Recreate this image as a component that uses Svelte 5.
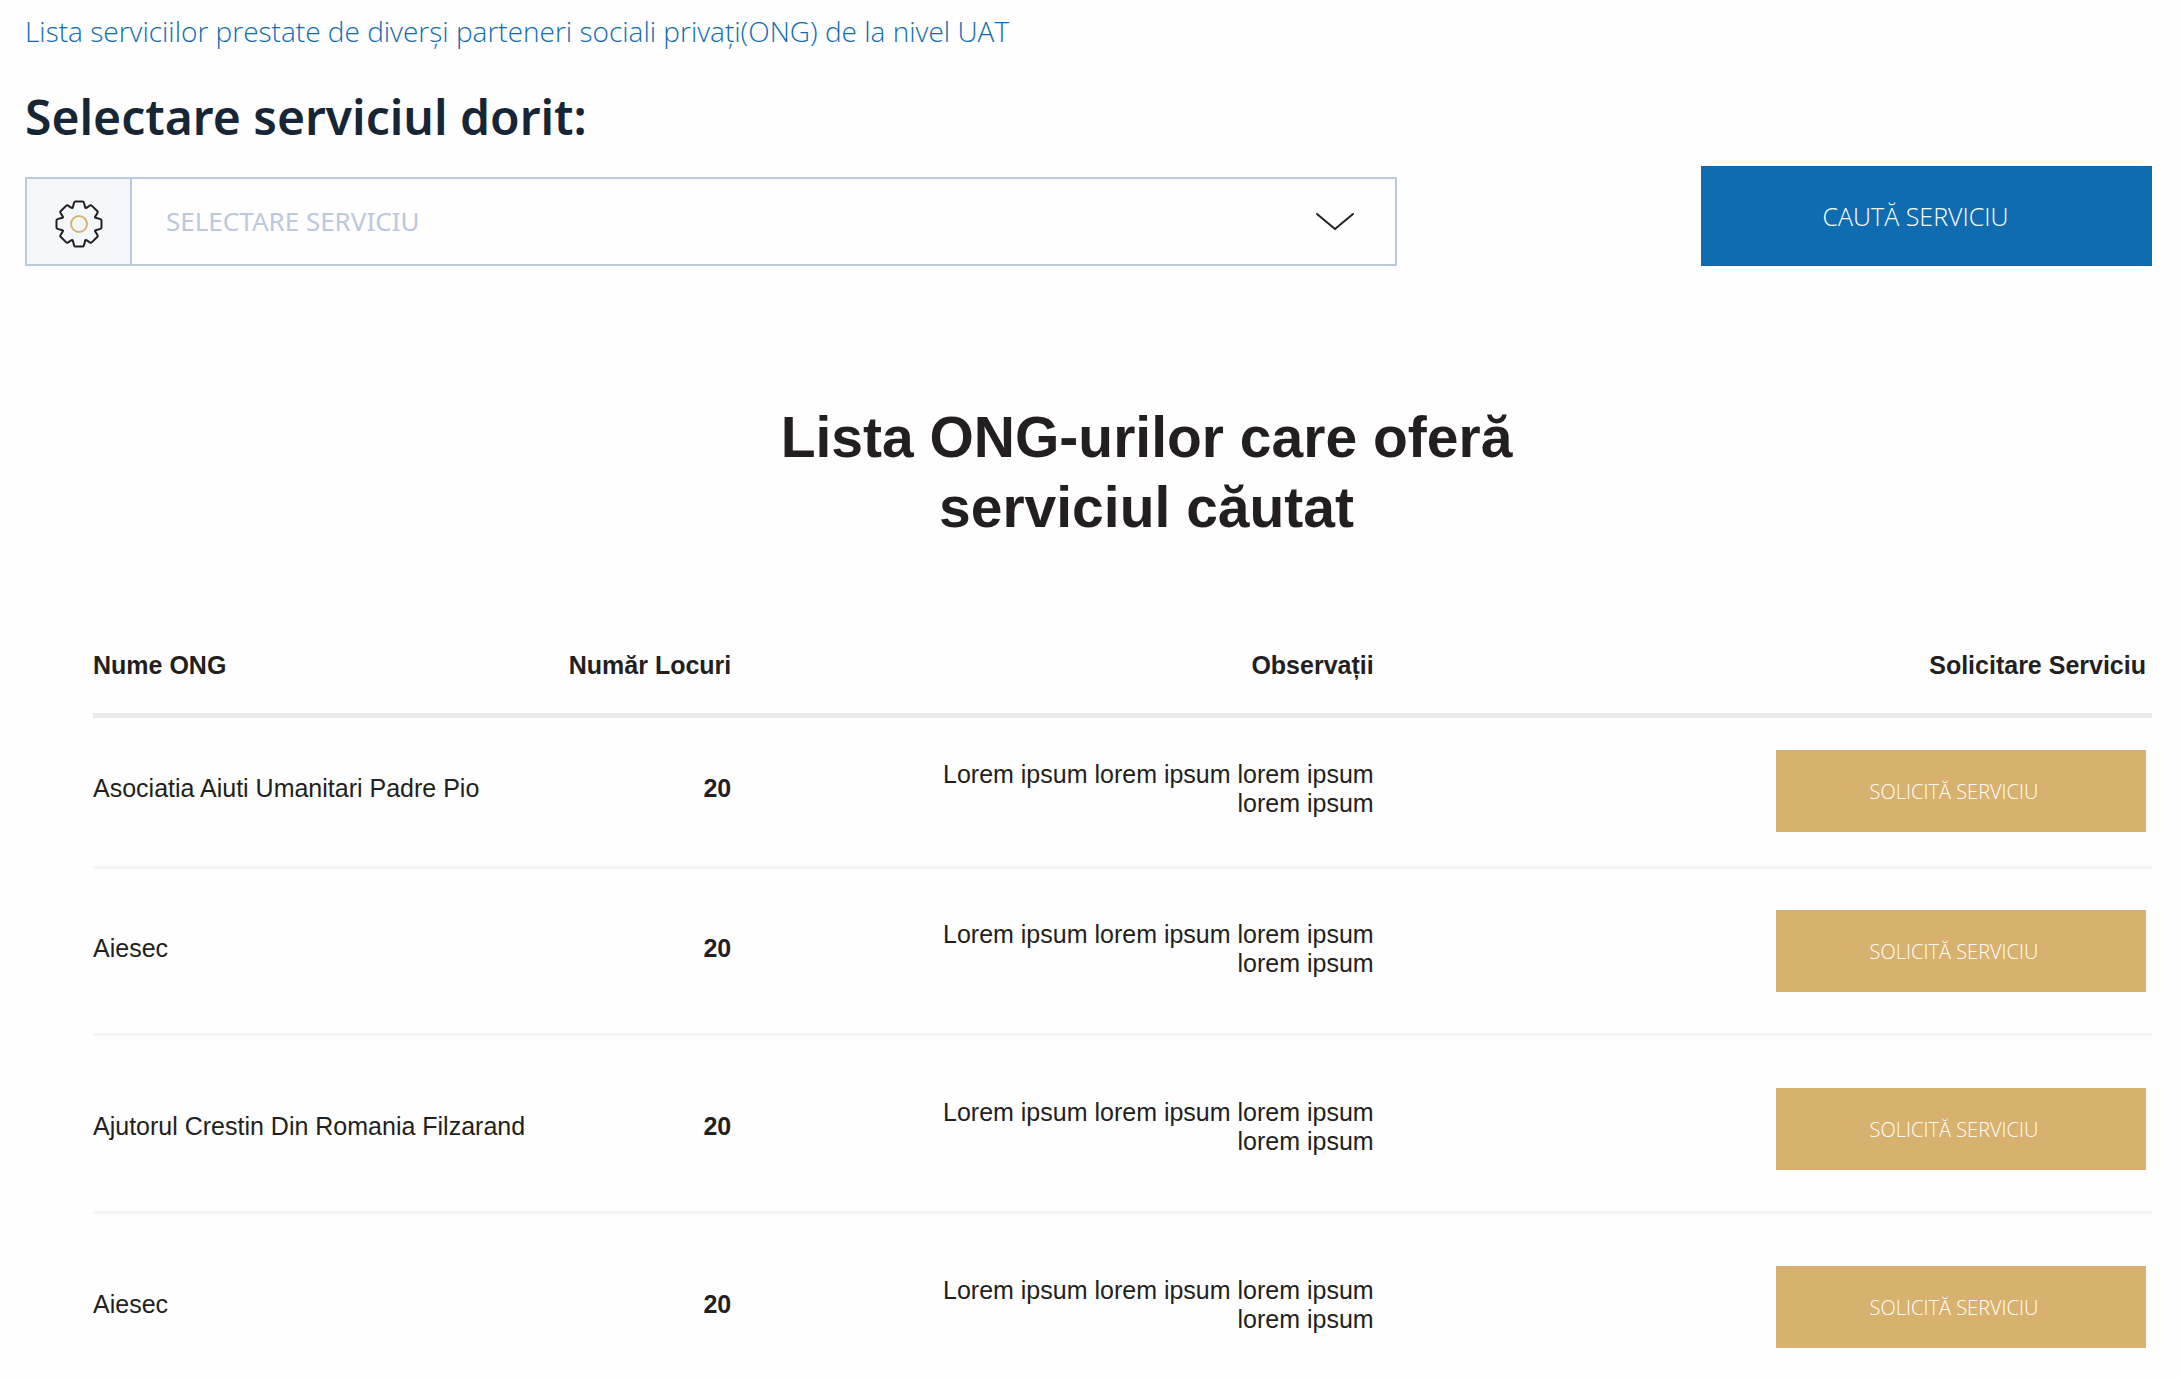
<script>
  const services = ["Consiliere", "Asistență socială", "Cantină socială"];

  const ongs = [
    { name: "Asociatia Aiuti Umanitari Padre Pio", places: 20, notes: "Lorem ipsum lorem ipsum lorem ipsum lorem ipsum" },
    { name: "Aiesec", places: 20, notes: "Lorem ipsum lorem ipsum lorem ipsum lorem ipsum" },
    { name: "Ajutorul Crestin Din Romania Filzarand", places: 20, notes: "Lorem ipsum lorem ipsum lorem ipsum lorem ipsum" },
    { name: "Aiesec", places: 20, notes: "Lorem ipsum lorem ipsum lorem ipsum lorem ipsum" },
  ];

  let selected = $state("");
</script>

<main>
  <a class="page-link" href="#lista">Lista serviciilor prestate de diverși parteneri sociali privați(ONG) de la nivel UAT</a>

  <form class="search" onsubmit={(e) => e.preventDefault()}>
    <label class="search-title" for="serviciu">Selectare serviciul dorit:</label>
    <div class="search-row">
      <div class="field">
        <span class="field-icon">
          <svg width="48" height="48" viewBox="0 0 48 48" fill="none" stroke-linejoin="round">
            <path
              stroke="#231f20"
              stroke-width="2"
              d="M20.500 1.500H27.500Q28.600 1.500 28.900 2.600L30.200 7.400Q30.500 8.300 31.400 7.800L35.200 5.400Q36 4.900 36.700 5.600L42.400 11.300Q43.100 12 42.600 12.800L40.200 16.600Q39.700 17.500 40.600 17.800L45.400 19.100Q46.500 19.400 46.500 20.500V27.500Q46.500 28.600 45.400 28.900L40.600 30.200Q39.700 30.500 40.200 31.400L42.600 35.200Q43.100 36 42.400 36.700L36.700 42.400Q36 43.100 35.200 42.600L31.400 40.200Q30.500 39.700 30.200 40.600L28.900 45.400Q28.600 46.500 27.500 46.500H20.500Q19.400 46.500 19.100 45.400L17.800 40.600Q17.500 39.700 16.600 40.200L12.800 42.600Q12 43.100 11.300 42.400L5.600 36.700Q4.900 36 5.400 35.200L7.800 31.400Q8.300 30.500 7.400 30.200L2.600 28.900Q1.500 28.600 1.500 27.500V20.500Q1.500 19.400 2.600 19.100L7.400 17.800Q8.300 17.500 7.800 16.600L5.400 12.800Q4.900 12 5.600 11.300L11.300 5.600Q12 4.900 12.800 5.400L16.600 7.800Q17.500 8.300 17.800 7.400L19.100 2.600Q19.400 1.500 20.500 1.500Z"
            />
            <circle cx="24" cy="24" r="8" stroke="#d9b36c" stroke-width="2" />
          </svg>
        </span>
        <select id="serviciu" bind:value={selected}>
          <option value="" disabled>SELECTARE SERVICIU</option>
          {#each services as service}
            <option value={service}>{service}</option>
          {/each}
        </select>
        <svg class="chevron" width="40" height="20" viewBox="0 0 40 20" fill="none" stroke="#231f20" stroke-width="2" stroke-linecap="round">
          <path d="M2 2l18 15L38 2" />
        </svg>
      </div>
      <button class="btn-search" type="submit">CAUTĂ SERVICIU</button>
    </div>
  </form>

  <section class="results" id="lista">
    <h2>Lista ONG-urilor care oferă serviciul căutat</h2>

    <table>
      <thead>
        <tr>
          <th class="col-name">Nume ONG</th>
          <th class="col-places">Număr Locuri</th>
          <th class="col-notes">Observații</th>
          <th class="col-action">Solicitare Serviciu</th>
        </tr>
      </thead>
      <tbody>
        {#each ongs as ong}
          <tr>
            <td class="name">{ong.name}</td>
            <td class="places">{ong.places}</td>
            <td class="notes"><p>{ong.notes}</p></td>
            <td class="action"><button type="button">SOLICITĂ SERVICIU</button></td>
          </tr>
        {/each}
      </tbody>
    </table>
  </section>
</main>

<style>
  :global(body) {
    margin: 0;
    background: #fefefe;
  }

  main {
    padding: 11px 28px 0 25px;
    overflow: hidden;
    color: #231f20;
    font-family: "Liberation Sans", Arial, sans-serif;
    font-size: 25px;
  }

  .page-link {
    display: block;
    color: #106cb1;
    font-family: "Open Sans", sans-serif;
    font-size: 28px;
    font-weight: 350;
    line-height: 40px;
    text-decoration: none;
  }

  .search-title {
    display: block;
    margin-top: 33px;
    color: #162636;
    font-family: "Noto Sans", sans-serif;
    font-size: 48px;
    font-weight: 600;
    line-height: 66px;
  }

  .search-row {
    display: flex;
    align-items: flex-end;
    justify-content: space-between;
    margin-top: 16px;
  }

  .field {
    position: relative;
    display: flex;
    box-sizing: border-box;
    width: 64.5%;
    height: 89px;
    border: 2px solid #bcc8dc;
  }

  .field-icon {
    display: flex;
    align-items: center;
    justify-content: center;
    width: 103px;
    padding-top: 4px;
    border-right: 2px solid #bcc8dc;
    background: #f4f8fb;
  }

  select {
    flex: 1;
    padding: 0 80px 2px 34px;
    border: 0;
    border-radius: 0;
    outline: 0;
    appearance: none;
    background: transparent;
    color: #bcc8dc;
    font-family: "Noto Sans", sans-serif;
    font-size: 26px;
    font-weight: 400;
  }

  .chevron {
    position: absolute;
    top: 33px;
    right: 40px;
    pointer-events: none;
  }

  .btn-search {
    width: 21.2%;
    height: 100px;
    padding: 0 22px 0 0;
    border: 0;
    background: #106cb1;
    color: #fff;
    font-family: "Open Sans", sans-serif;
    font-size: 25px;
    font-weight: 350;
    cursor: pointer;
  }

  .results {
    padding-left: 68px;
  }

  h2 {
    max-width: 800px;
    margin: 136px auto 0;
    padding-left: 48px;
    font-size: 57px;
    line-height: 70px;
    text-align: center;
  }

  table {
    width: 100%;
    margin-top: 99px;
    border-collapse: collapse;
    table-layout: fixed;
  }

  th {
    padding: 0 0 24px;
    border-bottom: 5px solid #eaeaea;
    line-height: 48px;
    text-align: right;
  }

  .col-name {
    width: 20%;
    text-align: left;
  }

  .col-places {
    width: 11%;
  }

  .col-notes {
    width: 31.2%;
  }

  .col-action {
    padding-right: 6px;
  }

  tbody tr {
    --top: 52px;
    --bottom: 41px;
  }

  tbody tr:nth-child(1) {
    --top: 32px;
    --bottom: 34px;
  }

  tbody tr:nth-child(2) {
    --top: 41px;
  }

  td {
    padding: var(--top) 0 calc(var(--bottom) + 5px);
    border-bottom: 3px solid #f3f4f7;
    line-height: 29px;
    text-align: right;
  }

  td.action {
    padding-bottom: var(--bottom);
  }

  td.name {
    text-align: left;
    white-space: nowrap;
  }

  .places {
    font-weight: bold;
  }

  .notes p {
    max-width: 450px;
    margin: 0 0 0 auto;
  }

  .action button {
    width: 370px;
    height: 82px;
    margin-right: 6px;
    padding: 0 14px 0 0;
    border: 0;
    background: #d7b16d;
    color: #fff;
    font-family: "Open Sans", sans-serif;
    font-size: 20px;
    font-weight: 350;
    vertical-align: middle;
    cursor: pointer;
  }
</style>
